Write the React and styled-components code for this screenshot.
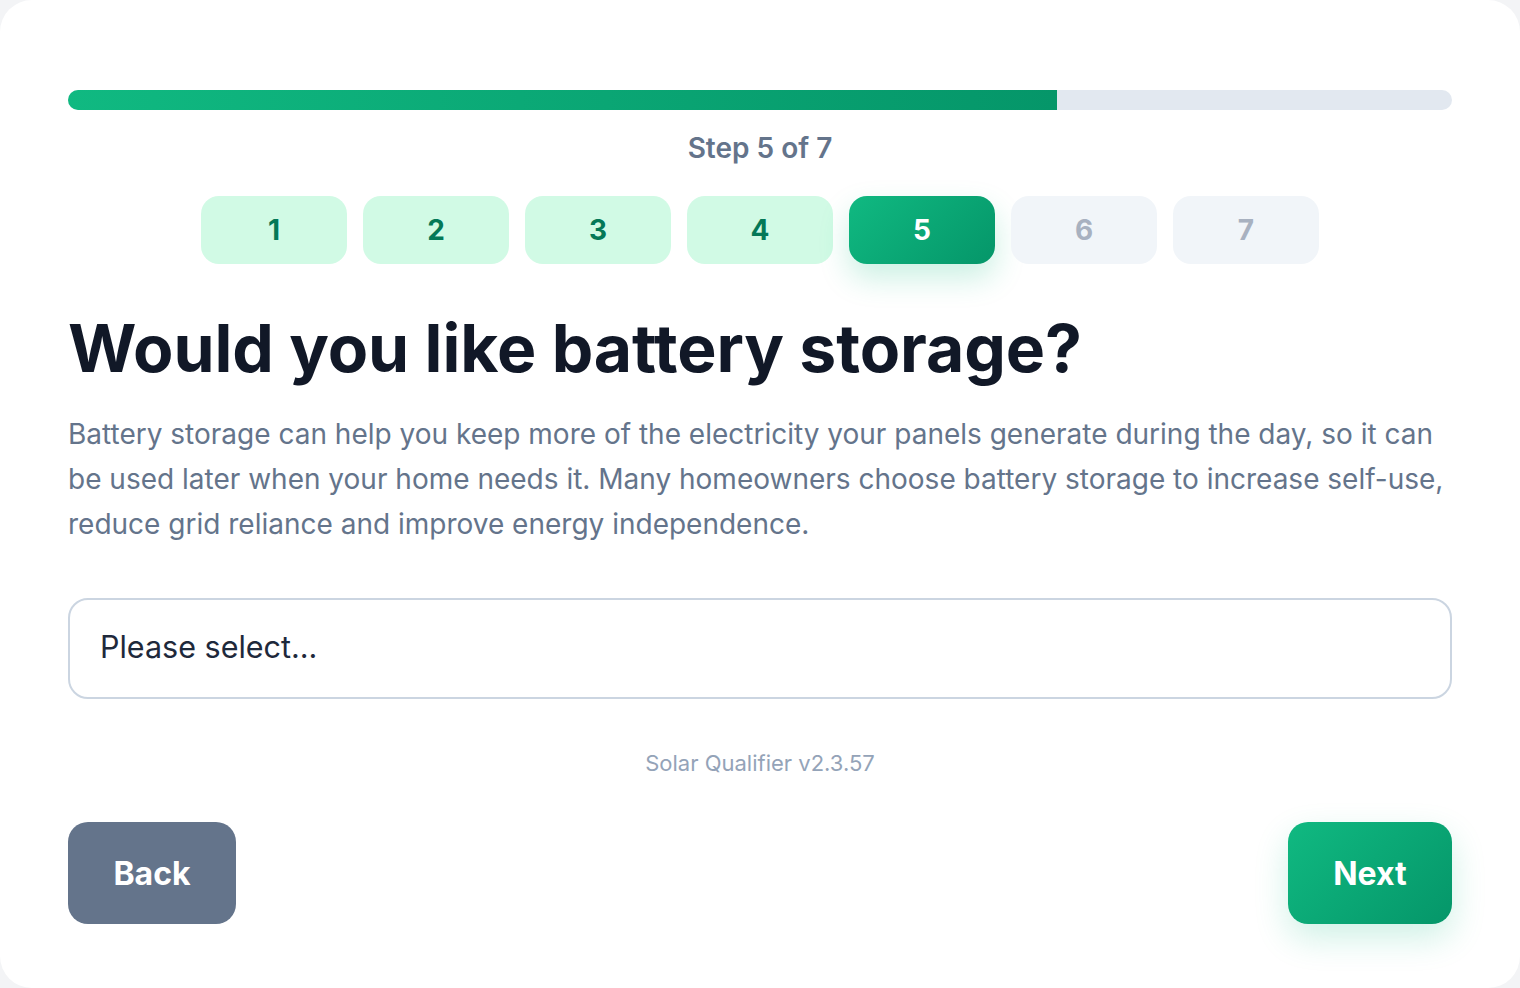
import React from "react";
import styled, { createGlobalStyle } from "styled-components";

const Global = createGlobalStyle`
  html, body {
    margin: 0;
    padding: 0;
    background: #f3f4f6;
    font-family: Inter, "Noto Sans", "Liberation Sans", sans-serif;
  }
  * { box-sizing: border-box; }
`;

const Card = styled.div`
  width: 1520px;
  height: 988px;
  background: #ffffff;
  border-radius: 32px;
  padding: 90px 68px 0;
  display: flex;
  flex-direction: column;
`;

const Track = styled.div`
  height: 20px;
  border-radius: 10px;
  background: #e2e8f0;
  overflow: hidden;
`;

const Fill = styled.div`
  height: 100%;
  background: linear-gradient(90deg, #10b981, #059669);
`;

const StepLabel = styled.div`
  margin-top: 22px;
  text-align: center;
  font-size: 28px;
  font-weight: 600;
  color: #64748b;
  line-height: 32px;
`;

const Pills = styled.div`
  margin-top: 32px;
  display: flex;
  justify-content: center;
  gap: 16px;
`;

const Pill = styled.div`
  width: 146px;
  height: 68px;
  border-radius: 18px;
  display: flex;
  align-items: center;
  justify-content: center;
  font-size: 28px;
  font-weight: 700;
  ${({ $state }) =>
    $state === "done"
      ? `background: #d1fae5; color: #047857;`
      : $state === "active"
      ? `background: linear-gradient(135deg, #10b981, #059669); color: #ffffff;
         box-shadow: 0 14px 30px rgba(16, 185, 129, 0.22);`
      : `background: #f1f5f9; color: #a8b1c0;`}
`;

const Title = styled.h1`
  margin: 46px 0 0;
  font-size: 66px;
  font-weight: 700;
  line-height: 76px;
  color: #111827;
  letter-spacing: -0.1px;
`;

const Lead = styled.p`
  margin: 26px 0 0;
  font-size: 28px;
  line-height: 45px;
  color: #64748b;
`;

const Select = styled.div`
  margin-top: 51px;
  height: 101px;
  border: 2px solid #cbd5e1;
  border-radius: 20px;
  display: flex;
  align-items: center;
  padding: 0 30px 4px;
  font-size: 30.5px;
  color: #1e293b;
`;

const Version = styled.div`
  margin-top: 51px;
  text-align: center;
  font-size: 22px;
  color: #94a3b8;
  line-height: 26px;
`;

const Actions = styled.div`
  margin-top: 46px;
  display: flex;
  justify-content: space-between;
`;

const Button = styled.button`
  height: 102px;
  width: ${({ $w }) => $w}px;
  border: none;
  border-radius: 20px;
  font-family: inherit;
  font-size: 32px;
  font-weight: 700;
  color: #ffffff;
  background: ${({ $primary }) =>
    $primary ? "linear-gradient(135deg, #10b981, #059669)" : "#64748b"};
  box-shadow: ${({ $primary }) =>
    $primary ? "0 14px 34px rgba(16, 185, 129, 0.2)" : "none"};
`;

const steps = [1, 2, 3, 4, 5, 6, 7];
const current = 5;

export default function App() {
  return (
    <>
      <Global />
      <Card>
        <Track>
          <Fill style={{ width: `${(current / steps.length) * 100}%` }} />
        </Track>
        <StepLabel>Step {current} of {steps.length}</StepLabel>
        <Pills>
          {steps.map((n) => (
            <Pill
              key={n}
              $state={n < current ? "done" : n === current ? "active" : "todo"}
            >
              {n}
            </Pill>
          ))}
        </Pills>
        <Title>Would you like battery storage?</Title>
        <Lead>
          Battery storage can help you keep more of the electricity your panels
          generate during the day, so it can be used later when your home needs
          it. Many homeowners choose battery storage to increase self-use,
          reduce grid reliance and improve energy independence.
        </Lead>
        <Select>Please select...</Select>
        <Version>Solar Qualifier v2.3.57</Version>
        <Actions>
          <Button $w={168}>Back</Button>
          <Button $w={164} $primary>Next</Button>
        </Actions>
      </Card>
    </>
  );
}
